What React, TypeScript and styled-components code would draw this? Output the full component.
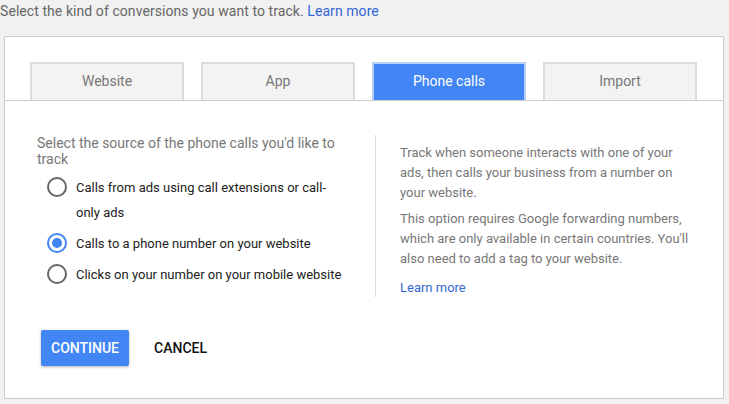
import styled, { createGlobalStyle } from "styled-components";

const Global = createGlobalStyle`
  html, body {
    margin: 0;
    padding: 0;
    background: #f1f1f1;
    font-family: Roboto, "Liberation Sans", Arial, sans-serif;
  }
`;

const Page = styled.div`
  width: 729px;
  height: 404px;
  overflow: hidden;
`;

const Intro = styled.div`
  font-size: 14px;
  letter-spacing: 0.07px;
  color: #666;
  padding: 3px 0 0 0;
  height: 36px;
  box-sizing: border-box;
`;

const Link = styled.a`
  color: #3367d6;
  text-decoration: none;
  cursor: pointer;
`;

const RightLink = styled(Link)`
  display: block;
  margin-top: 9px;
`;

const Card = styled.div`
  margin-left: 4px;
  width: 720px;
  height: 363px;
  box-sizing: border-box;
  background: #fff;
  border: 1px solid #ccc;
  display: flex;
  flex-direction: column;
`;

const Tabs = styled.div`
  display: flex;
  gap: 17px;
  padding: 25px 0 0 25px;
  border-bottom: 1px solid #ccc;
`;

const Tab = styled.div<{ $active?: boolean }>`
  width: 154px;
  height: 38px;
  padding-bottom: 3px;
  box-sizing: border-box;
  display: flex;
  align-items: center;
  justify-content: center;
  font-size: 14px;
  border: 2px solid ${(p) => (p.$active ? "#b7d0f8" : "#dcdcdc")};
  border-bottom: none;
  background: ${(p) => (p.$active ? "#4285f4" : "#f3f3f3")};
  color: ${(p) => (p.$active ? "#fff" : "#777")};
`;

const Body = styled.div`
  display: flex;
  padding: 34px 0 0 32px;
`;

const Left = styled.div`
  width: 338px;
  border-right: 1px solid #ddd;
  height: 162px;
`;

const Question = styled.div`
  font-size: 14px;
  color: #777;
  line-height: 16px;
  width: 320px;
  margin-bottom: 8px;
`;

const Option = styled.label`
  display: flex;
  align-items: flex-start;
  gap: 9px;
  padding-left: 10px;
  font-size: 13px;
  color: #222;
  line-height: 25px;
  margin-bottom: 6px;
  width: 297px;
`;

const Radio = styled.span<{ $checked?: boolean }>`
  flex: none;
  width: 20px;
  height: 20px;
  margin-top: 2px;
  box-sizing: border-box;
  border-radius: 50%;
  border: 2px solid ${(p) => (p.$checked ? "#4285f4" : "#666")};
  display: flex;
  align-items: center;
  justify-content: center;
  &::after {
    content: "";
    display: ${(p) => (p.$checked ? "block" : "none")};
    width: 10px;
    height: 10px;
    border-radius: 50%;
    background: #4285f4;
  }
`;

const Right = styled.div`
  padding: 8px 0 0 24px;
  width: 292px;
  font-size: 13px;
  color: #777;
  line-height: 20px;
`;

const Para = styled.p`
  margin: 0 0 6px 0;
`;

const Actions = styled.div`
  display: flex;
  align-items: center;
  gap: 25px;
  padding: 32px 0 0 36px;
`;

const Primary = styled.button`
  height: 36px;
  padding: 0 10px;
  border: none;
  border-radius: 2px;
  background: #4285f4;
  color: #fff;
  font-family: Roboto, "Liberation Sans", sans-serif;
  font-weight: 500;
  font-size: 14px;
  box-shadow: 0 1px 3px rgba(0, 0, 0, 0.3);
`;

const Flat = styled.button`
  border: none;
  background: none;
  padding: 0;
  color: #111;
  font-family: Roboto, "Liberation Sans", sans-serif;
  font-weight: 500;
  font-size: 14px;
`;

const tabs = ["Website", "App", "Phone calls", "Import"];

const options = [
  { label: "Calls from ads using call extensions or call-only ads", checked: false },
  { label: "Calls to a phone number on your website", checked: true },
  { label: "Clicks on your number on your mobile website", checked: false },
];

export default function App() {
  return (
    <Page>
      <Global />
      <Intro>
        Select the kind of conversions you want to track. <Link>Learn more</Link>
      </Intro>
      <Card>
        <Tabs>
          {tabs.map((t) => (
            <Tab key={t} $active={t === "Phone calls"}>
              {t}
            </Tab>
          ))}
        </Tabs>
        <Body>
          <Left>
            <Question>Select the source of the phone calls you'd like to track</Question>
            {options.map((o) => (
              <Option key={o.label}>
                <Radio $checked={o.checked} />
                <span>{o.label}</span>
              </Option>
            ))}
          </Left>
          <Right>
            <Para>
              Track when someone interacts with one of your ads, then calls your business from a
              number on your website.
            </Para>
            <Para>
              This option requires Google forwarding numbers, which are only available in certain
              countries. You'll also need to add a tag to your website.
            </Para>
            <RightLink>Learn more</RightLink>
          </Right>
        </Body>
        <Actions>
          <Primary>CONTINUE</Primary>
          <Flat>CANCEL</Flat>
        </Actions>
      </Card>
    </Page>
  );
}
